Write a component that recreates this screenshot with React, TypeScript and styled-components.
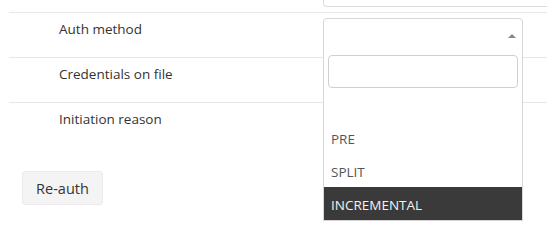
import React from 'react';
import styled, { createGlobalStyle } from 'styled-components';

const GlobalStyle = createGlobalStyle`
  html, body {
    margin: 0;
    padding: 0;
    background: #fff;
  }
  body {
    font-family: "Open Sans", "Noto Sans", sans-serif;
    font-size: 13.5px;
    color: #333;
  }
`;

const Page = styled.div`
  width: 547px;
  height: 243px;
  overflow: hidden;
  padding-left: 9px;
  box-sizing: border-box;
`;

const Table = styled.div`
  position: relative;
  width: 560px;
`;

const PrevRow = styled.div`
  display: grid;
  grid-template-columns: 314px 1fr;
  height: 12px;
`;

const PrevField = styled.div`
  height: 6px;
  border: 1px solid #dcdcdc;
  border-top: 0;
  border-radius: 0 0 4px 4px;
`;

const Row = styled.div`
  display: grid;
  grid-template-columns: 314px 1fr;
  height: 45px;
  box-sizing: border-box;
  border-top: 1px solid #e8e8e8;
`;

const Label = styled.div`
  padding: 6px 0 0 50px;
  line-height: 20px;
  color: #333;
`;

const Cell = styled.div`
  position: relative;
  padding-top: 5px;
`;

const SelectBox = styled.div<{ $open?: boolean }>`
  position: relative;
  width: 200px;
  height: 34px;
  box-sizing: border-box;
  border: 1px solid #d6d6d6;
  border-radius: ${(p) => (p.$open ? '4px 4px 0 0' : '4px')};
  background: #fff;
`;

const Arrow = styled.span<{ $up?: boolean }>`
  position: absolute;
  right: 6px;
  top: 15px;
  width: 0;
  height: 0;
  border-left: 4px solid transparent;
  border-right: 4px solid transparent;
  ${(p) => (p.$up ? 'border-bottom: 4px solid #888;' : 'border-top: 4px solid #888;')}
`;

const Dropdown = styled.div`
  position: absolute;
  left: 0;
  top: 38px;
  z-index: 10;
  width: 200px;
  box-sizing: border-box;
  border: 1px solid #d6d6d6;
  border-top: 0;
  background: #fff;
`;

const SearchWrap = styled.div`
  padding: 4px 4px 0 4px;
`;

const Search = styled.div`
  height: 33px;
  box-sizing: border-box;
  border: 1px solid #d0d0d0;
  border-radius: 4px;
`;

const Options = styled.ul`
  list-style: none;
  margin: 0;
  padding: 0;
`;

const Option = styled.li<{ $active?: boolean }>`
  height: 33px;
  box-sizing: border-box;
  padding: 2px 7px 0;
  line-height: 32px;
  color: ${(p) => (p.$active ? '#f2f2f2' : '#555')};
  background: ${(p) => (p.$active ? '#3a3a3a' : 'transparent')};
`;

const Footer = styled.div`
  padding: 24px 0 0 13px;
`;

const Button = styled.button`
  width: 81px;
  height: 34px;
  box-sizing: border-box;
  border: 1px solid #efe9ec;
  border-radius: 3px;
  background: #f4f4f4;
  color: #333;
  font-family: inherit;
  font-size: 14.5px;
  font-weight: 500;
  cursor: pointer;
`;

const options = ['', 'PRE', 'SPLIT', 'INCREMENTAL'];

export default function App() {
  return (
    <Page>
      <GlobalStyle />
      <Table>
        <PrevRow>
          <div />
          <PrevField />
        </PrevRow>
        <Row>
          <Label>Auth method</Label>
          <Cell>
            <SelectBox $open>
              <Arrow $up />
            </SelectBox>
            <Dropdown>
              <SearchWrap>
                <Search />
              </SearchWrap>
              <Options>
                {options.map((o, i) => (
                  <Option key={i} $active={o === 'INCREMENTAL'}>
                    {o || '\u00a0'}
                  </Option>
                ))}
              </Options>
            </Dropdown>
          </Cell>
        </Row>
        <Row>
          <Label>Credentials on file</Label>
          <Cell />
        </Row>
        <Row>
          <Label>Initiation reason</Label>
          <Cell />
        </Row>
      </Table>
      <Footer>
        <Button>Re-auth</Button>
      </Footer>
    </Page>
  );
}
